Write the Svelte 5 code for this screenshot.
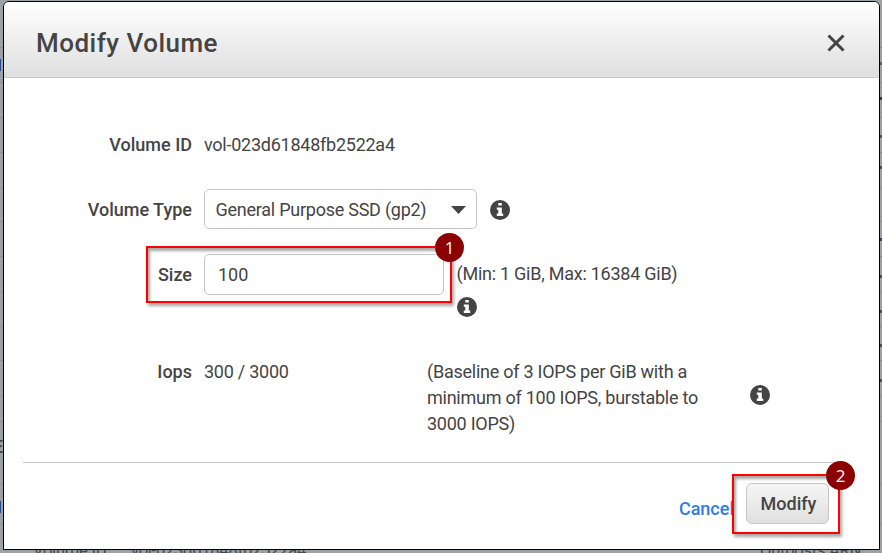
<script>
  const edge = [47, 82, 117, 152, 187, 221, 256, 291, 326, 360, 395, 421, 484, 524];
  const marks = [
    { y: 62, c: '#6b5a50' }, { y: 97, c: '#4b3030' }, { y: 135, c: '#5b5350' },
    { y: 166, c: '#554c46' }, { y: 238, c: '#3c3e66' }, { y: 275, c: '#554c46' },
    { y: 310, c: '#554c46' }, { y: 344, c: '#554c46' }, { y: 379, c: '#554c46' }
  ];
</script>

{#snippet info()}
  <svg class="info" width="20" height="20" viewBox="0 0 20 20" aria-label="info">
    <circle cx="10" cy="10" r="10" fill="#444" />
    <path d="M8.3 3h3.5v2.5H8.3zM6.8 7.4h5v6.2h1.4v2.5H6.8v-2.5h1.5V9.8H6.8z" fill="#fff" />
  </svg>
{/snippet}

<div class="page">
  <div class="backdrop">
    {#each edge as y}<i class="rule" style="top:{y}px"></i>{/each}
    {#each marks as m}<i class="mark" style="top:{m.y}px;background:{m.c}"></i>{/each}
    <i class="link" style="top:59px"></i>
    <i class="link" style="top:501px"></i>
    <b class="letter">E</b>
    <span class="under u1">Volume ID</span>
    <span class="under u2">vol-023d61848fb2522a4</span>
    <span class="under u3">Outposts ARN</span>
  </div>

  <section class="modal">
    <header>
      <h1>Modify Volume</h1>
      <svg class="close" width="18" height="18" viewBox="0 0 18 18">
        <path d="M1.5 1.5 16.5 16.5M16.5 1.5 1.5 16.5" stroke="#444" stroke-width="3" />
      </svg>
    </header>

    <div class="body">
      <div class="row id">
        <div class="label">Volume ID</div>
        <div class="value vid">vol-023d61848fb2522a4</div>
      </div>
      <div class="row type">
        <div class="label">Volume Type</div>
        <div class="select">
          <span>General Purpose SSD (gp2)</span>
          <svg width="15" height="8" viewBox="0 0 15 8"><path d="M0 0h15L7.5 8z" fill="#444" /></svg>
        </div>
        {@render info()}
      </div>
      <div class="row size">
        <div class="label">Size</div>
        <div class="input">100</div>
        <div class="limits">
          <span>(Min: 1 GiB, Max: 16384 GiB)</span>
          {@render info()}
        </div>
        <div class="callout c1"><span class="badge">1</span></div>
      </div>
      <div class="row iops">
        <div class="label">Iops</div>
        <div class="value now">300 / 3000</div>
        <div class="note">(Baseline of 3 IOPS per GiB with a<br />minimum of 100 IOPS, burstable to<br />3000 IOPS)</div>
        {@render info()}
      </div>
    </div>

    <footer>
      <span class="cancel">Cancel</span>
      <button>Modify</button>
      <div class="callout c2"><span class="badge">2</span></div>
    </footer>
  </section>
</div>

<style>
  .page {
    box-sizing: border-box;
    position: relative;
    width: 882px;
    height: 553px;
    padding: 1px 2px 3px 3px;
    overflow: hidden;
    background: #9ba1a5;
    font: 18px/26px Roboto, sans-serif;
    color: #444;
  }
  .backdrop { position: absolute; inset: 0; }
  .rule { position: absolute; left: 0; right: 0; height: 1px; background: #888e91; }
  .mark { position: absolute; left: 880px; width: 2px; height: 3px; }
  .link { position: absolute; left: 0; width: 1px; height: 12px; background: #234b8b; }
  .letter { position: absolute; left: -7px; top: 434px; font-weight: 500; }
  .under {
    position: absolute;
    top: 541px;
    font-size: 16.6px;
    line-height: 20px;
    letter-spacing: -0.27px;
    color: #444b50;
    white-space: nowrap;
  }
  .u1 { left: 33px; }
  .u2 { left: 131px; }
  .u3 { left: 760px; }
  .modal {
    box-sizing: border-box;
    position: relative;
    height: 549px;
    border: 1px solid #000;
    border-radius: 6px 6px 0 0;
    background: #fff;
    overflow: hidden;
    display: flex;
    flex-direction: column;
  }
  header {
    box-sizing: border-box;
    height: 76px;
    padding: 7px 34px 0 32px;
    display: flex;
    align-items: center;
    justify-content: space-between;
    background: linear-gradient(#fff, #dfdfdf);
    border-bottom: 1px solid #c8c8c8;
  }
  h1 { margin: -1px 0 0; font-size: 26px; line-height: 32px; font-weight: 500; letter-spacing: 0.48px; }
  .body { height: 384px; padding-top: 54px; box-sizing: border-box; }
  .row { display: flex; position: relative; white-space: nowrap; }
  .label { width: 188px; margin-right: 12px; text-align: right; font-weight: 500; flex: none; }
  .value, .note, .select span, .limits span { letter-spacing: -0.25px; }
  .id { height: 57px; }
  .type { height: 65px; align-items: flex-start; }
  .type .label { padding-top: 8px; }
  .type .info { margin: 11px 0 0 12.5px; }
  .select {
    box-sizing: border-box;
    width: 273px;
    height: 40px;
    border: 1px solid #c6c6c6;
    border-radius: 5px;
    padding: 1px 10.5px 0;
    display: flex;
    align-items: center;
    justify-content: space-between;
  }
  .size { height: 104px; }
  .size .label { padding-top: 8px; }
  .input {
    box-sizing: border-box;
    width: 240px;
    height: 41px;
    border: 1px solid #c6c6c6;
    border-radius: 5px;
    padding: 7px 13px;
  }
  .limits { margin-left: 12.5px; padding-top: 7px; display: flex; flex-direction: column; gap: 10px; }
  .iops { padding-top: 1px; }
  .now { width: 223px; }
  .note { width: 322.5px; }
  .iops .info { margin-top: 26px; }
  .info { flex: none; }
  footer {
    position: relative;
    margin: 0 40px 0 19px;
    height: 60px;
    border-top: 1px solid #c8c8c8;
    display: flex;
    justify-content: flex-end;
    padding: 20px 10px 0 0;
  }
  .cancel { margin: 13px 12px 0 0; color: #2e7de1; font-weight: 500; }
  button {
    box-sizing: border-box;
    width: 83px;
    height: 41px;
    padding: 0 0 0 2px;
    border: 1px solid #c6c6c6;
    border-radius: 6px;
    background: linear-gradient(#f5f5f5, #e0e0e0);
    color: #444;
    font: 500 18px/26px Roboto, sans-serif;
  }
  .callout {
    box-sizing: border-box;
    position: absolute;
    border: 2px solid #f00;
    box-shadow: 2px 3px 3px rgba(0, 0, 0, 0.35), inset 2px 3px 3px rgba(0, 0, 0, 0.35);
  }
  .c1 { left: 142px; top: -8px; width: 306px; height: 57px; }
  .c2 { left: 709px; top: 11px; width: 108px; height: 60px; }
  .badge {
    position: absolute;
    right: -14px;
    top: -15px;
    width: 29px;
    height: 29px;
    border-radius: 50%;
    background: #8b0000;
    color: #fff;
    font: 17px/29px "Open Sans", sans-serif;
    text-align: center;
  }
  .c2 .badge { right: -17px; }
</style>
